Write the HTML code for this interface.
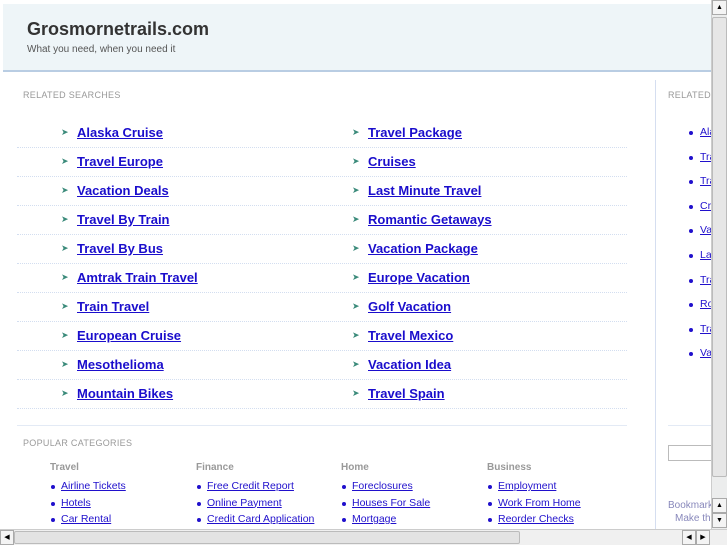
<!DOCTYPE html>
<html><head><style>
*{margin:0;padding:0;box-sizing:border-box}
body{width:727px;height:545px;overflow:hidden;background:#fff;font-family:"Liberation Sans",sans-serif;position:relative}
.a{position:absolute;white-space:nowrap}
.hdr{position:absolute;left:3px;top:4px;width:708px;height:68px;background:#eef5f8;border-bottom:2px solid #b9cde3}
.rl{font-size:13px;font-weight:bold;color:#1a0dcc;text-decoration:underline}
.ar{font-size:9px;color:#3a8a7a}
.sep{position:absolute;left:17px;width:610px;border-top:1px dotted #d3def0}
.lbl{font-size:9px;color:#999;letter-spacing:.3px}
.ch{font-size:10px;font-weight:bold;color:#999}
.cl{font-size:10.5px;color:#2010cc;text-decoration:underline}
.b{position:absolute;width:4px;height:4px;border-radius:2px;background:#2010cc}
</style></head><body>
<div class="hdr"></div>
<div class="a" style="left:27px;top:19px;font-size:18px;font-weight:bold;color:#333">Grosmornetrails.com</div>
<div class="a" style="left:27px;top:44px;font-size:10px;color:#555">What you need, when you need it</div>
<div class="a lbl" style="left:23px;top:90px">RELATED SEARCHES</div>
<div class="a" style="left:655px;top:80px;width:1px;height:449px;background:#d5def0"></div>
<div class="a lbl" style="left:668px;top:90px">RELATED</div>

<div id="rows"></div>

<script>
var L=["Alaska Cruise","Travel Europe","Vacation Deals","Travel By Train","Travel By Bus","Amtrak Train Travel","Train Travel","European Cruise","Mesothelioma","Mountain Bikes"];
var R=["Travel Package","Cruises","Last Minute Travel","Romantic Getaways","Vacation Package","Europe Vacation","Golf Vacation","Travel Mexico","Vacation Idea","Travel Spain"];
var R2=["Ala","Tra","Tra","Cru","Vac","Las","Tra","Ro","Tra","Vac"];
var h="";
for(var i=0;i<10;i++){var y=125+i*29;
h+='<div class="a ar" style="left:61px;top:'+(y+2)+'px">&#10148;</div><div class="a rl" style="left:77px;top:'+y+'px">'+L[i]+'</div>';
h+='<div class="a ar" style="left:352px;top:'+(y+2)+'px">&#10148;</div><div class="a rl" style="left:368px;top:'+y+'px">'+R[i]+'</div>';
h+='<div class="sep" style="top:'+(y+22)+'px"></div>';
var y2=126+i*24.6;
h+='<div class="b" style="left:689px;top:'+(y2+5)+'px"></div><div class="a cl" style="left:700px;top:'+y2+'px;width:11px;overflow:hidden">'+R2[i]+'</div>';}
document.getElementById("rows").innerHTML=h;
</script>
<div class="a" style="left:17px;top:425px;width:610px;border-top:1px solid #e3eaf5"></div>
<div class="a" style="left:668px;top:425px;width:43px;border-top:1px solid #e3eaf5"></div>
<div class="a lbl" style="left:23px;top:438px">POPULAR CATEGORIES</div>
<div id="cats"></div>
<script>
var C=[["Travel",50,["Airline Tickets","Hotels","Car Rental"]],["Finance",196,["Free Credit Report","Online Payment","Credit Card Application"]],["Home",341,["Foreclosures","Houses For Sale","Mortgage"]],["Business",487,["Employment","Work From Home","Reorder Checks"]]];
var h="";
C.forEach(function(c){h+='<div class="a ch" style="left:'+c[1]+'px;top:462px">'+c[0]+'</div>';
c[2].forEach(function(t,j){var y=480+j*16.5;h+='<div class="b" style="left:'+(c[1]+1)+'px;top:'+(y+5)+'px"></div><div class="a cl" style="left:'+(c[1]+11)+'px;top:'+y+'px">'+t+'</div>';});});
document.getElementById("cats").innerHTML=h;
</script>
<div class="a" style="left:668px;top:445px;width:43px;height:16px;border:1px solid #bbb;border-right:none"></div>
<div class="a" style="left:668px;top:500px;font-size:10px;color:#8888bb">Bookmark</div>
<div class="a" style="left:675px;top:513px;font-size:10px;color:#8888bb">Make thi</div>
<div class="a" style="left:711px;top:0;width:16px;height:529px;background:#eceded;border-left:1px solid #ccc"></div>
<div class="a" style="left:712px;top:0;width:15px;height:15px;background:#f4f4f4;border:1px solid #aaa;font-size:7px;text-align:center;line-height:13px">&#9650;</div>
<div class="a" style="left:712px;top:17px;width:15px;height:460px;background:#e6e6e6;border:1px solid #bbb;border-radius:2px"></div>
<div class="a" style="left:712px;top:498px;width:15px;height:15px;background:#f4f4f4;border:1px solid #aaa;font-size:7px;text-align:center;line-height:13px">&#9650;</div>
<div class="a" style="left:712px;top:513px;width:15px;height:15px;background:#f4f4f4;border:1px solid #aaa;font-size:7px;text-align:center;line-height:13px">&#9660;</div>
<div class="a" style="left:0;top:529px;width:727px;height:16px;background:#f0f0f0;border-top:1px solid #ccc"></div>
<div class="a" style="left:0;top:530px;width:14px;height:15px;border:1px solid #aaa;background:#f4f4f4;font-size:7px;line-height:13px;text-align:center">&#9664;</div>
<div class="a" style="left:14px;top:531px;width:506px;height:13px;background:#e3e3e3;border:1px solid #bbb;border-radius:2px"></div>
<div class="a" style="left:682px;top:530px;width:14px;height:15px;border:1px solid #aaa;background:#f4f4f4;font-size:7px;line-height:13px;text-align:center">&#9664;</div>
<div class="a" style="left:696px;top:530px;width:14px;height:15px;border:1px solid #aaa;background:#f4f4f4;font-size:7px;line-height:13px;text-align:center">&#9654;</div>
</body></html>
